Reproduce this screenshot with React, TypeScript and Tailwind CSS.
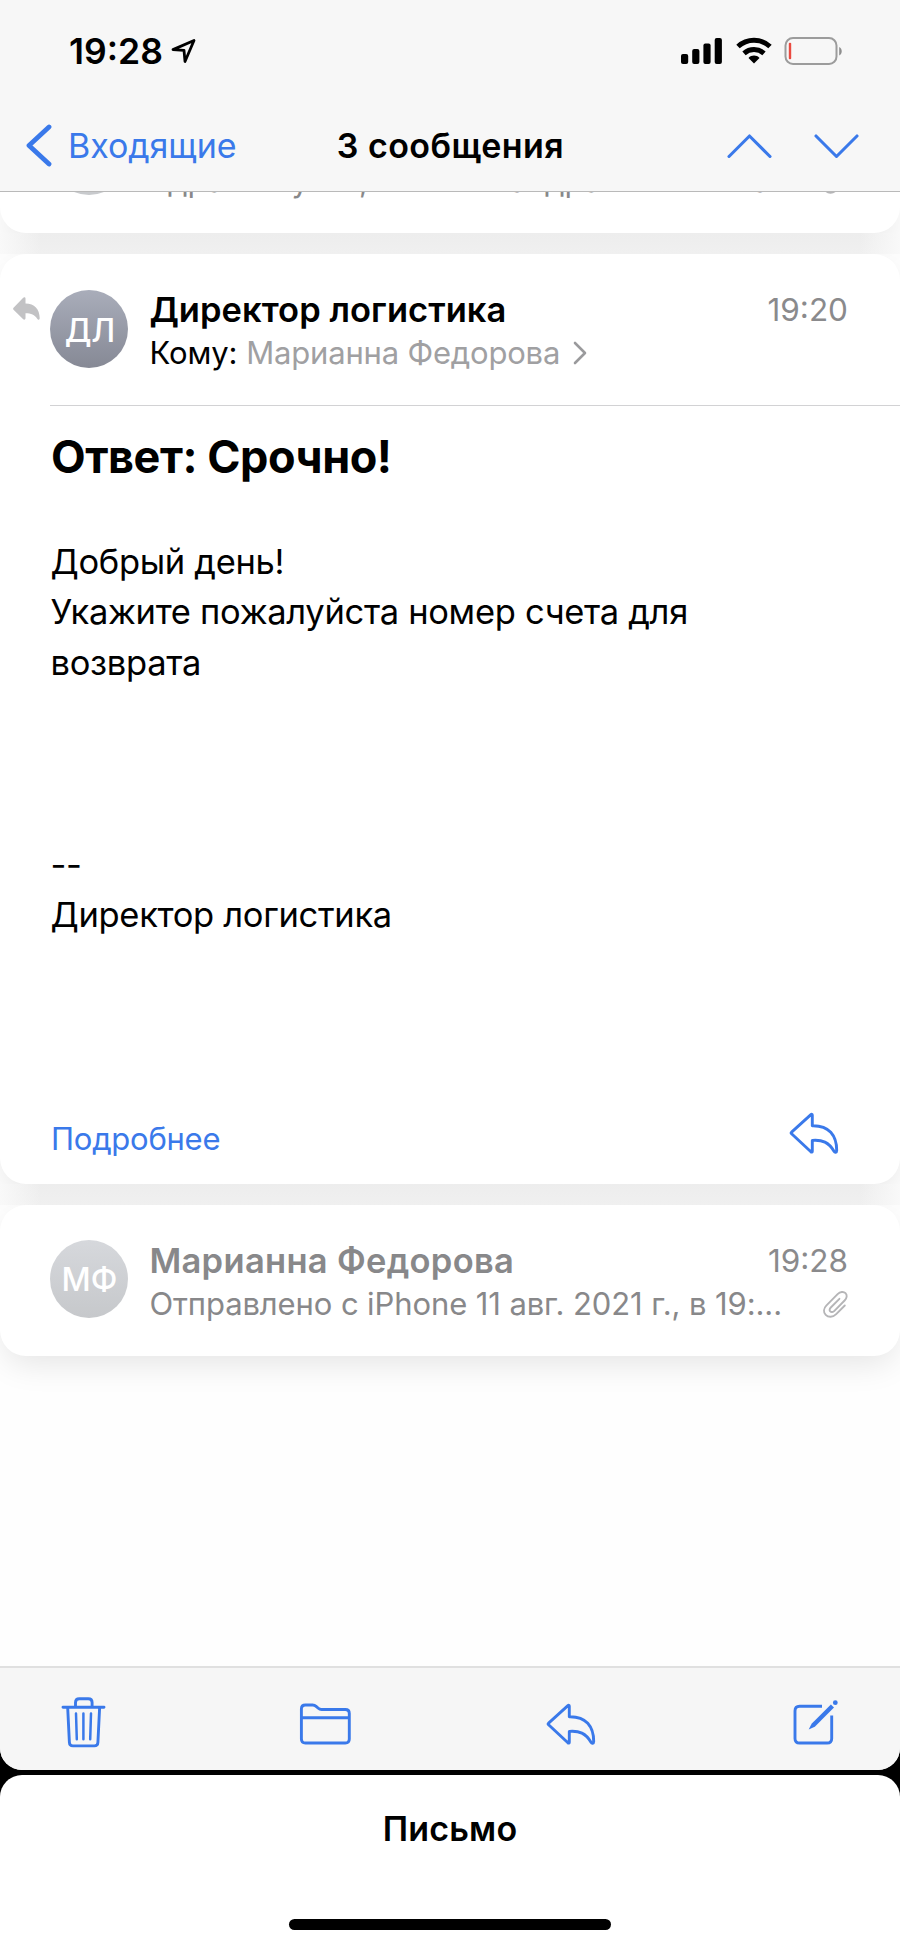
import type { ReactNode } from 'react'

const bodyLines = [
  'Добрый день!',
  'Укажите пожалуйста номер счета для',
  'возврата',
  '',
  '',
  '',
  '--',
  'Директор логистика'
]

function Chevron({ d, width, height, stroke }: { d: string; width: number; height: number; stroke: number }) {
  return (
    <svg width={width} height={height} viewBox={`0 0 ${width} ${height}`} fill="none" stroke="currentColor" strokeWidth={stroke}>
      <path strokeLinecap="round" strokeLinejoin="round" d={d} />
    </svg>
  )
}

function ToolIcon({ children }: { children: ReactNode }) {
  return (
    <svg
      className="w-[52px] h-[52px] text-[#3a79ea] overflow-visible"
      fill="none"
      stroke="currentColor"
      strokeWidth="2.9"
      strokeLinecap="round"
      strokeLinejoin="round"
      viewBox="0 0 52 52"
    >
      {children}
    </svg>
  )
}

function ReplyIcon() {
  return (
    <ToolIcon>
      <path d="M23.3 10.2c0-1-.7-1.2-1.4-.6L2.6 27.1c-.7.6-.7 1 0 1.7l19.3 18c.7.6 1.4.4 1.4-.6V35.4c10-.8 16.4 1.8 21.7 10.8.9 1.500 2.700 1.400 2.700-.7C47.700 30.500 40 20.300 23.300 20.700z" />
    </ToolIcon>
  )
}

function ClipIcon() {
  return (
    <svg className="w-[26px] h-[28px] text-[#b5b5b7]" fill="none" stroke="currentColor" strokeWidth="1.9" strokeLinecap="round" viewBox="0 0 26 28">
      <path d="M22.8 15.5 14.2 24.2C10.8 27.6 6.2 27.4 3.7 24.8 1.2 22.2 1.5 18.4 4.5 15.4L15.6 4.2C18.2 1.6 21.6 1.3 23.5 3.2 25.4 5.1 25 8.1 22.6 10.5L12.4 20.8C11 22.2 9.2 22.4 8.2 21.4 7.2 20.4 7.5 18.8 8.8 17.5L17.4 8.8" />
    </svg>
  )
}

function MessageHeader({
  initials,
  name,
  time,
  muted,
  children
}: {
  initials: string
  name: string
  time: string
  muted?: boolean
  children: ReactNode
}) {
  return (
    <div className="flex h-[151px] pl-[50.4px] pr-[52px] pt-[35px]">
      <div
        className={
          muted
            ? 'mt-[0.4px] size-[78px] shrink-0 rounded-full bg-linear-to-b from-[#d6d8dc] to-[#c6c8cb] text-white flex items-center justify-center pt-[2px] text-[32px] font-medium'
            : 'mt-px size-[78px] shrink-0 rounded-full bg-linear-to-b from-[#a9adba] to-[#868995] text-white flex items-center justify-center pt-[3px] text-[32px] tracking-[-1px] font-medium'
        }
      >
        {initials}
      </div>
      <div className="ml-[21px] flex-1 min-w-0">
        <div className="flex justify-between h-[42px] leading-[42px]">
          <span
            className={
              muted
                ? 'text-[34.5px] tracking-[0.3px] font-semibold text-[#88888a]'
                : 'text-[34.5px] tracking-[0.05px] font-semibold text-black'
            }
          >
            {name}
          </span>
          <span className="text-[31.5px] text-[#8a8a8c]">{time}</span>
        </div>
        <div className="flex items-center h-[43px] leading-[43px] text-[31px] tracking-[-0.1px] whitespace-nowrap">{children}</div>
      </div>
    </div>
  )
}

const cardClass = 'relative shrink-0 bg-white rounded-[26px] shadow-[0_12px_32px_-4px_rgba(0,0,0,0.1)]'

// Shaded strip between two cards, fading out towards the screen edges
function CardGap() {
  return (
    <div className="relative z-10 shrink-0 h-[21px] bg-linear-to-b from-[#ededed] to-[#f0f0f0] flex justify-between">
      <div className="w-[40px] bg-linear-to-r from-[#f9f9f9] to-transparent" />
      <div className="w-[40px] bg-linear-to-l from-[#f9f9f9] to-transparent" />
    </div>
  )
}

export default function App() {
  return (
    <main className="w-[900px] h-[1947px] overflow-hidden bg-black text-black font-['Inter',sans-serif] flex flex-col gap-[5px]">
      <div className="h-[1770px] shrink-0 bg-[#fefefe] rounded-b-[22px] overflow-hidden flex flex-col">
        {/* Status bar and navigation */}
        <header className="shrink-0 h-[192px] bg-[#f7f7f7] border-b border-[#b9b9b9]">
          <div className="h-[102px] pl-[69px] pr-[56px] flex items-center justify-between">
            <div className="flex items-center gap-[8px]">
              <span className="text-[35.5px] leading-[44px] pt-px font-semibold">19:28</span>
              <svg className="w-[26px] h-[26px]" fill="none" stroke="currentColor" strokeWidth="2.8" strokeLinejoin="round" viewBox="0 0 26 26">
                <path d="M2 11.6 23 2.5 14 23.5 13 12.3z" />
              </svg>
            </div>
            <div className="flex items-center">
              <svg className="w-[42px] h-[28px]" fill="currentColor" viewBox="0 0 42 28">
                <rect x="0" y="17" width="7.2" height="10" rx="2" />
                <rect x="11.2" y="12" width="7.2" height="15" rx="2" />
                <rect x="22.4" y="6.5" width="7.2" height="20.5" rx="2" />
                <rect x="33.7" y="1" width="7.2" height="26" rx="2" />
              </svg>
              <svg className="ml-[13px] w-[36px] h-[28px]" fill="none" stroke="currentColor" strokeWidth="5" viewBox="0 0 36 28">
                <path d="M2 9.5C11 1.2 25 1.2 34 9.5" />
                <path d="M8 16.3C13.8 11.2 22.2 11.2 28 16.3" />
                <path d="M12.5 21c3-3.2 8-3.2 11 0L18 26.5z" fill="currentColor" stroke="none" />
              </svg>
              <svg className="ml-[12px] w-[60px] h-[28px]" fill="none" viewBox="0 0 60 28">
                <rect x="1.5" y="1" width="51" height="26" rx="7.5" stroke="#9c9c9c" strokeWidth="2" />
                <rect x="4.8" y="5.8" width="2.4" height="16.5" rx="1" fill="#ea4a40" />
                <path d="M55.2 10v8.5c3.4-1.5 3.4-7 0-8.5z" fill="#8e8e8e" />
              </svg>
            </div>
          </div>
          <div className="h-[87px] grid grid-cols-[1fr_auto_1fr] items-center text-[34px]">
            <div className="flex items-center pl-[26px] text-[#3a79ea]">
              <Chevron d="M23 3 3 21.500 23 40" width={26} height={43} stroke={4.8} />
              <span className="ml-[16px] tracking-[-0.05px]">Входящие</span>
            </div>
            <h1 className="pl-px font-semibold tracking-[0.45px]">3 сообщения</h1>
            <div className="flex items-center justify-end gap-[42px] pr-[41px] text-[#3a79ea]">
              <Chevron d="M2 22.5 22.5 2 43 22.5" width={45} height={24} stroke={3.1} />
              <Chevron d="M2 2 22.5 22.5 43 2" width={45} height={24} stroke={3.1} />
            </div>
          </div>
        </header>

        {/* Thread, scrolled so only the foot of the first message shows */}
        <section className="flex-1 min-h-0 overflow-hidden flex flex-col">
          <article className="relative shrink-0 h-[41px] bg-white rounded-b-[26px] shadow-[0_12px_32px_-4px_rgba(0,0,0,0.1)] flex items-start pl-[50px] pr-[52px]">
            <div className="-mt-[75px] size-[78px] shrink-0 rounded-full bg-[#c8cacd]" />
            <p className="-mt-[33px] ml-[21px] h-[43px] leading-[43px] text-[31px] tracking-[-0.05px] whitespace-nowrap text-[#88888a]">
              Здравствуйте, от Александра нет ответа
            </p>
            <span className="ml-auto -mt-[26px]"><ClipIcon /></span>
          </article>

          <CardGap />

          <article className={`${cardClass} h-[930px] flex flex-col`}>
            <svg className="absolute left-[13px] top-[43px] w-[27px] h-[24px] text-[#c2c2c4]" fill="currentColor" viewBox="0 0 27 24">
              <path d="M12.5 1.5v4.9C21.5 6.6 26.6 12 26.7 21c0 2-1.5 2.4-2.5.8-2.6-4.3-6-5.6-11.7-5.6v5.1c0 1.4-1.3 1.9-2.3 1L.8 13c-.9-.9-.9-1.8 0-2.6L10.2.8c1-.9 2.3-.6 2.3.7z" />
            </svg>
            <MessageHeader initials="ДЛ" name="Директор логистика" time="19:20">
              <span>Кому:</span>
              <span className="ml-[9px] mr-[13px] tracking-[-0.2px] text-[#a0a0a2]">Марианна Федорова</span>
              <span className="text-[#9a9a9c]">
                <Chevron d="M2 2 12 12 2 22" width={14} height={24} stroke={2.6} />
              </span>
            </MessageHeader>
            <div className="ml-[50px] h-px shrink-0 bg-[#d2d2d4]" />
            <h2 className="mt-[23px] ml-[51px] text-[45px] leading-[56px] tracking-[-0.45px] font-bold">Ответ: Срочно!</h2>
            <div className="mt-[51.5px] ml-[50.5px] text-[34.5px] leading-[50.5px] tracking-[-0.31px]">
              {bodyLines.map((line, index) => (
                <p key={index} className="h-[50.5px] whitespace-nowrap">{line}</p>
              ))}
            </div>
            <div className="mt-auto h-[90px] pl-[51px] pr-[59px] flex items-center justify-between">
              <span className="text-[31px] tracking-[-0.25px] text-[#3a79ea]">Подробнее</span>
              <span className="mb-[17px]"><ReplyIcon /></span>
            </div>
          </article>

          <CardGap />

          <article className={cardClass}>
            <MessageHeader initials="МФ" name="Марианна Федорова" time="19:28" muted>
              <span className="text-[#88888a]">Отправлено с iPhone 11 авг. 2021 г., в 19:...</span>
              <span className="ml-auto"><ClipIcon /></span>
            </MessageHeader>
          </article>
        </section>

        {/* Toolbar */}
        <nav className="relative shrink-0 h-[104px] bg-[#f6f6f6] border-t-2 border-[#e0e0e0] px-[58px] pt-[28px] flex items-start justify-between">
          <ToolIcon>
            <path d="M5 11.3h41M17.5 11V6.5c0-2.5 1.3-3.8 3.8-3.8h9c2.500 0 3.800 1.300 3.800 3.800V11M9.700 12l1.700 34.500c.1 2.200 1.400 3.400 3.500 3.400h21.500c2.100 0 3.400-1.200 3.500-3.400L41.600 12" />
            <path d="M18 17.5l.8 25.8M25.4 17.5v25.8M33 17.5l-.8 25.8" strokeWidth="2.5" />
          </ToolIcon>
          <ToolIcon>
            <path d="M-.6 43V13c0-2.6 1.4-4 4-4h7.2c1.500 0 2.500.4 3.500 1.300l2.200 2c1 .9 1.900 1.200 3.300 1.200h23.700c2.600 0 4 1.400 4 4V43c0 2.600-1.400 4-4 4H3.400c-2.600 0-4-1.400-4-4zM-.6 21.700h47.900" />
          </ToolIcon>
          <ReplyIcon />
          <ToolIcon>
            <path d="M32 10.3H9.6C6.7 10.3 5 12 5 14.9v27.500C5 45.300 6.700 47 9.600 47h27.500c2.900 0 4.600-1.700 4.600-4.600V19.500" strokeLinecap="butt" />
            <path d="M40.9 8.5 44 11.5 24.8 30.7 18.7 33.6 21.6 27.7z" fill="currentColor" stroke="none" />
            <circle cx="45.3" cy="6.7" r="2.4" fill="currentColor" stroke="none" />
          </ToolIcon>
        </nav>
      </div>

      {/* Draft sheet */}
      <div className="h-[172px] shrink-0 bg-white rounded-t-[22px] flex flex-col items-center">
        <span className="mt-[32px] text-[34px] leading-[44px] tracking-[0.2px] font-semibold">Письмо</span>
        <div className="mt-[68px] w-[322px] h-[11px] shrink-0 rounded-full bg-black" />
      </div>
    </main>
  )
}
